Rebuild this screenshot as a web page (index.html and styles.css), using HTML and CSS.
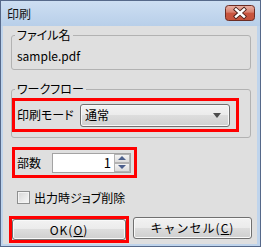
FILE: index.html
```html
<!DOCTYPE html>
<html lang="ja">
<head>
    <meta charset="UTF-8">
    <title>印刷</title>
<link rel="stylesheet" href="styles.css">
</head>
<body>
    <div class="window">
        <div class="titlebar">
            <span class="title">印刷</span>
            <span class="close">
                <svg width="30" height="16" viewBox="0 0 30 16">
                    <defs>
                        <linearGradient id="cg" x1="0" y1="0" x2="0" y2="1">
                            <stop offset="0" stop-color="#eab2a6"/>
                            <stop offset="0.45" stop-color="#d8806e"/>
                            <stop offset="0.5" stop-color="#c9553f"/>
                            <stop offset="1" stop-color="#c4523b"/>
                        </linearGradient>
                    </defs>
                    <rect x="0.5" y="0.5" width="29" height="15" rx="3" fill="url(#cg)" stroke="#6b2c24"/>
                    <path d="M11 4.5 L19 11.5 M19 4.5 L11 11.5" stroke="#4a2019" stroke-width="4.2" stroke-linecap="square"/>
                    <path d="M11 4.5 L19 11.5 M19 4.5 L11 11.5" stroke="#fff" stroke-width="2.4" stroke-linecap="square"/>
                </svg>
            </span>
        </div>

        <div class="client">
            <fieldset class="group group-file">
                <legend>ファイル名</legend>
                <div class="filename">sample.pdf</div>
            </fieldset>

            <fieldset class="group group-flow">
                <legend>ワークフロー</legend>
                <div class="mark mark-mode">
                    <span class="label label-mode">印刷モード</span>
                    <div class="combo">
                        <span class="combo-text">通常</span>
                        <span class="arrow"></span>
                    </div>
                </div>
            </fieldset>

            <div class="mark mark-copies">
                <span class="label label-copies">部数</span>
                <div class="spin">
                    <span class="spin-value">1</span>
                    <div class="spin-btns">
                        <span class="spin-btn up"><i></i></span>
                        <span class="spin-btn down"><i></i></span>
                    </div>
                </div>
            </div>

            <div class="check">
                <span class="checkbox"></span>
                <span>出力時ジョブ削除</span>
            </div>

            <div class="buttons">
                <div class="mark mark-ok">
                    <button class="btn btn-ok">OK(<u>O</u>)</button>
                </div>
                <button class="btn btn-cancel">キャンセル(<u>C</u>)</button>
            </div>
        </div>
    </div>
</body>
</html>
```

FILE: styles.css
```css
*{
    margin: 0;
    padding: 0;
    box-sizing: border-box;
}
body{
    font-family: "Noto Sans CJK JP", sans-serif;
    font-size: 12px;
    font-feature-settings: "palt" 1;
    color: #000;
    background: #fff;
}
.window{
    width: 261px;
    height: 247px;
    border: 1px solid #56698a;
    background: #bfd4ec;
    padding: 0 3px 2px 2px;
    display: flex;
    flex-direction: column;
}
.titlebar{
    height: 25px;
    margin: 0 -3px 0 -2px;
    padding: 0 5px 0 6px;
    display: flex;
    justify-content: space-between;
    align-items: center;
    background: linear-gradient(#cddef2, #b8cfe9);
}
.title{
    line-height: 14px;
    margin-top: 1px;
    color: #111;
}
.close{
    align-self: flex-start;
    margin-top: 4px;
    height: 16px;
}
.close svg{
    display: block;
}

.client{
    flex: 1;
    background: #dfdfdf;
    padding: 2px 6px 0 8px;
    display: flex;
    flex-direction: column;
    align-items: flex-start;
}

.group{
    width: 240px;
    border: 1px solid #b2b2b2;
    border-radius: 3px;
    padding: 0;
    min-width: 0;
}
.group legend{
    line-height: 14px;
    height: 14px;
    padding: 0 2px;
    margin-left: 3px;
}
.filename{
    line-height: 14px;
    padding: 7px 0 6px 5px;
}
.group-flow{
    margin-top: 12px;
}

.mark{
    border: 3px solid #f00;
    display: flex;
    align-items: center;
}
.mark-mode{
    width: 227px;
    height: 34px;
    margin: 2px 0 5px 0;
    padding-left: 2px;
}
.label{
    line-height: 14px;
}
.label-mode{
    width: 63px;
}
.combo{
    width: 150px;
    height: 23px;
    border: 1px solid #707070;
    border-radius: 3px;
    background: linear-gradient(#f2f2f2 0%, #ebebeb 50%, #dddddd 50%, #d0d0d0 100%);
    box-shadow: inset 0 0 0 1px #f8f8f8;
    display: flex;
    align-items: center;
    justify-content: space-between;
    padding: 0 8px 0 4px;
}
.combo-text{
    line-height: 14px;
}
.arrow{
    width: 0;
    height: 0;
    border-left: 4px solid transparent;
    border-right: 4px solid transparent;
    border-top: 5px solid #4c4c4c;
}

.mark-copies{
    width: 125px;
    height: 31px;
    margin: 9px 0 0 1px;
    padding-left: 2px;
}
.label-copies{
    width: 35px;
}
.spin{
    width: 79px;
    height: 20px;
    border: 1px solid #a3a3a3;
    background: #fff;
    display: flex;
}
.spin-value{
    flex: 1;
    text-align: right;
    line-height: 18px;
    padding-right: 3px;
    font-size: 13px;
}
.spin-btns{
    width: 16px;
    display: flex;
    flex-direction: column;
}
.spin-btn{
    flex: 1;
    border: 1px solid #b3b3b3;
    background: linear-gradient(#f4f4f4, #dcdcdc);
    display: flex;
    justify-content: center;
    align-items: center;
}
.spin-btn i{
    width: 0;
    height: 0;
    border-left: 4px solid transparent;
    border-right: 4px solid transparent;
}
.spin-btn.up i{
    border-bottom: 4px solid #4b5f8c;
}
.spin-btn.down i{
    border-top: 4px solid #4b5f8c;
}

.check{
    margin: 13px 0 0 6px;
    height: 13px;
    display: flex;
    align-items: center;
    line-height: 14px;
}
.checkbox{
    width: 13px;
    height: 13px;
    border: 1px solid #8e8f8f;
    background: linear-gradient(135deg, #d6d6d6, #f8f8f8);
    box-shadow: inset 0 0 0 1px #f4f4f4;
    margin-right: 4px;
}

.buttons{
    margin: 12px 0 0 -2px;
    display: flex;
    align-items: flex-start;
    gap: 4px;
}
.mark-ok{
    width: 120px;
    height: 27px;
}
.btn{
    font-family: inherit;
    font-size: 12px;
    color: #000;
    border: 1px solid #707070;
    border-radius: 3px;
    background: linear-gradient(#f2f2f2 0%, #ebebeb 50%, #dddddd 50%, #cfcfcf 100%);
    box-shadow: inset 0 0 0 1px #f9f9f9;
    line-height: 14px;
    letter-spacing: 1px;
}
.btn u{
    text-underline-offset: 1px;
}
.btn-ok{
    width: 114px;
    height: 21px;
}
.btn-cancel{
    width: 119px;
    height: 22px;
    margin-top: 1px;
}
```
